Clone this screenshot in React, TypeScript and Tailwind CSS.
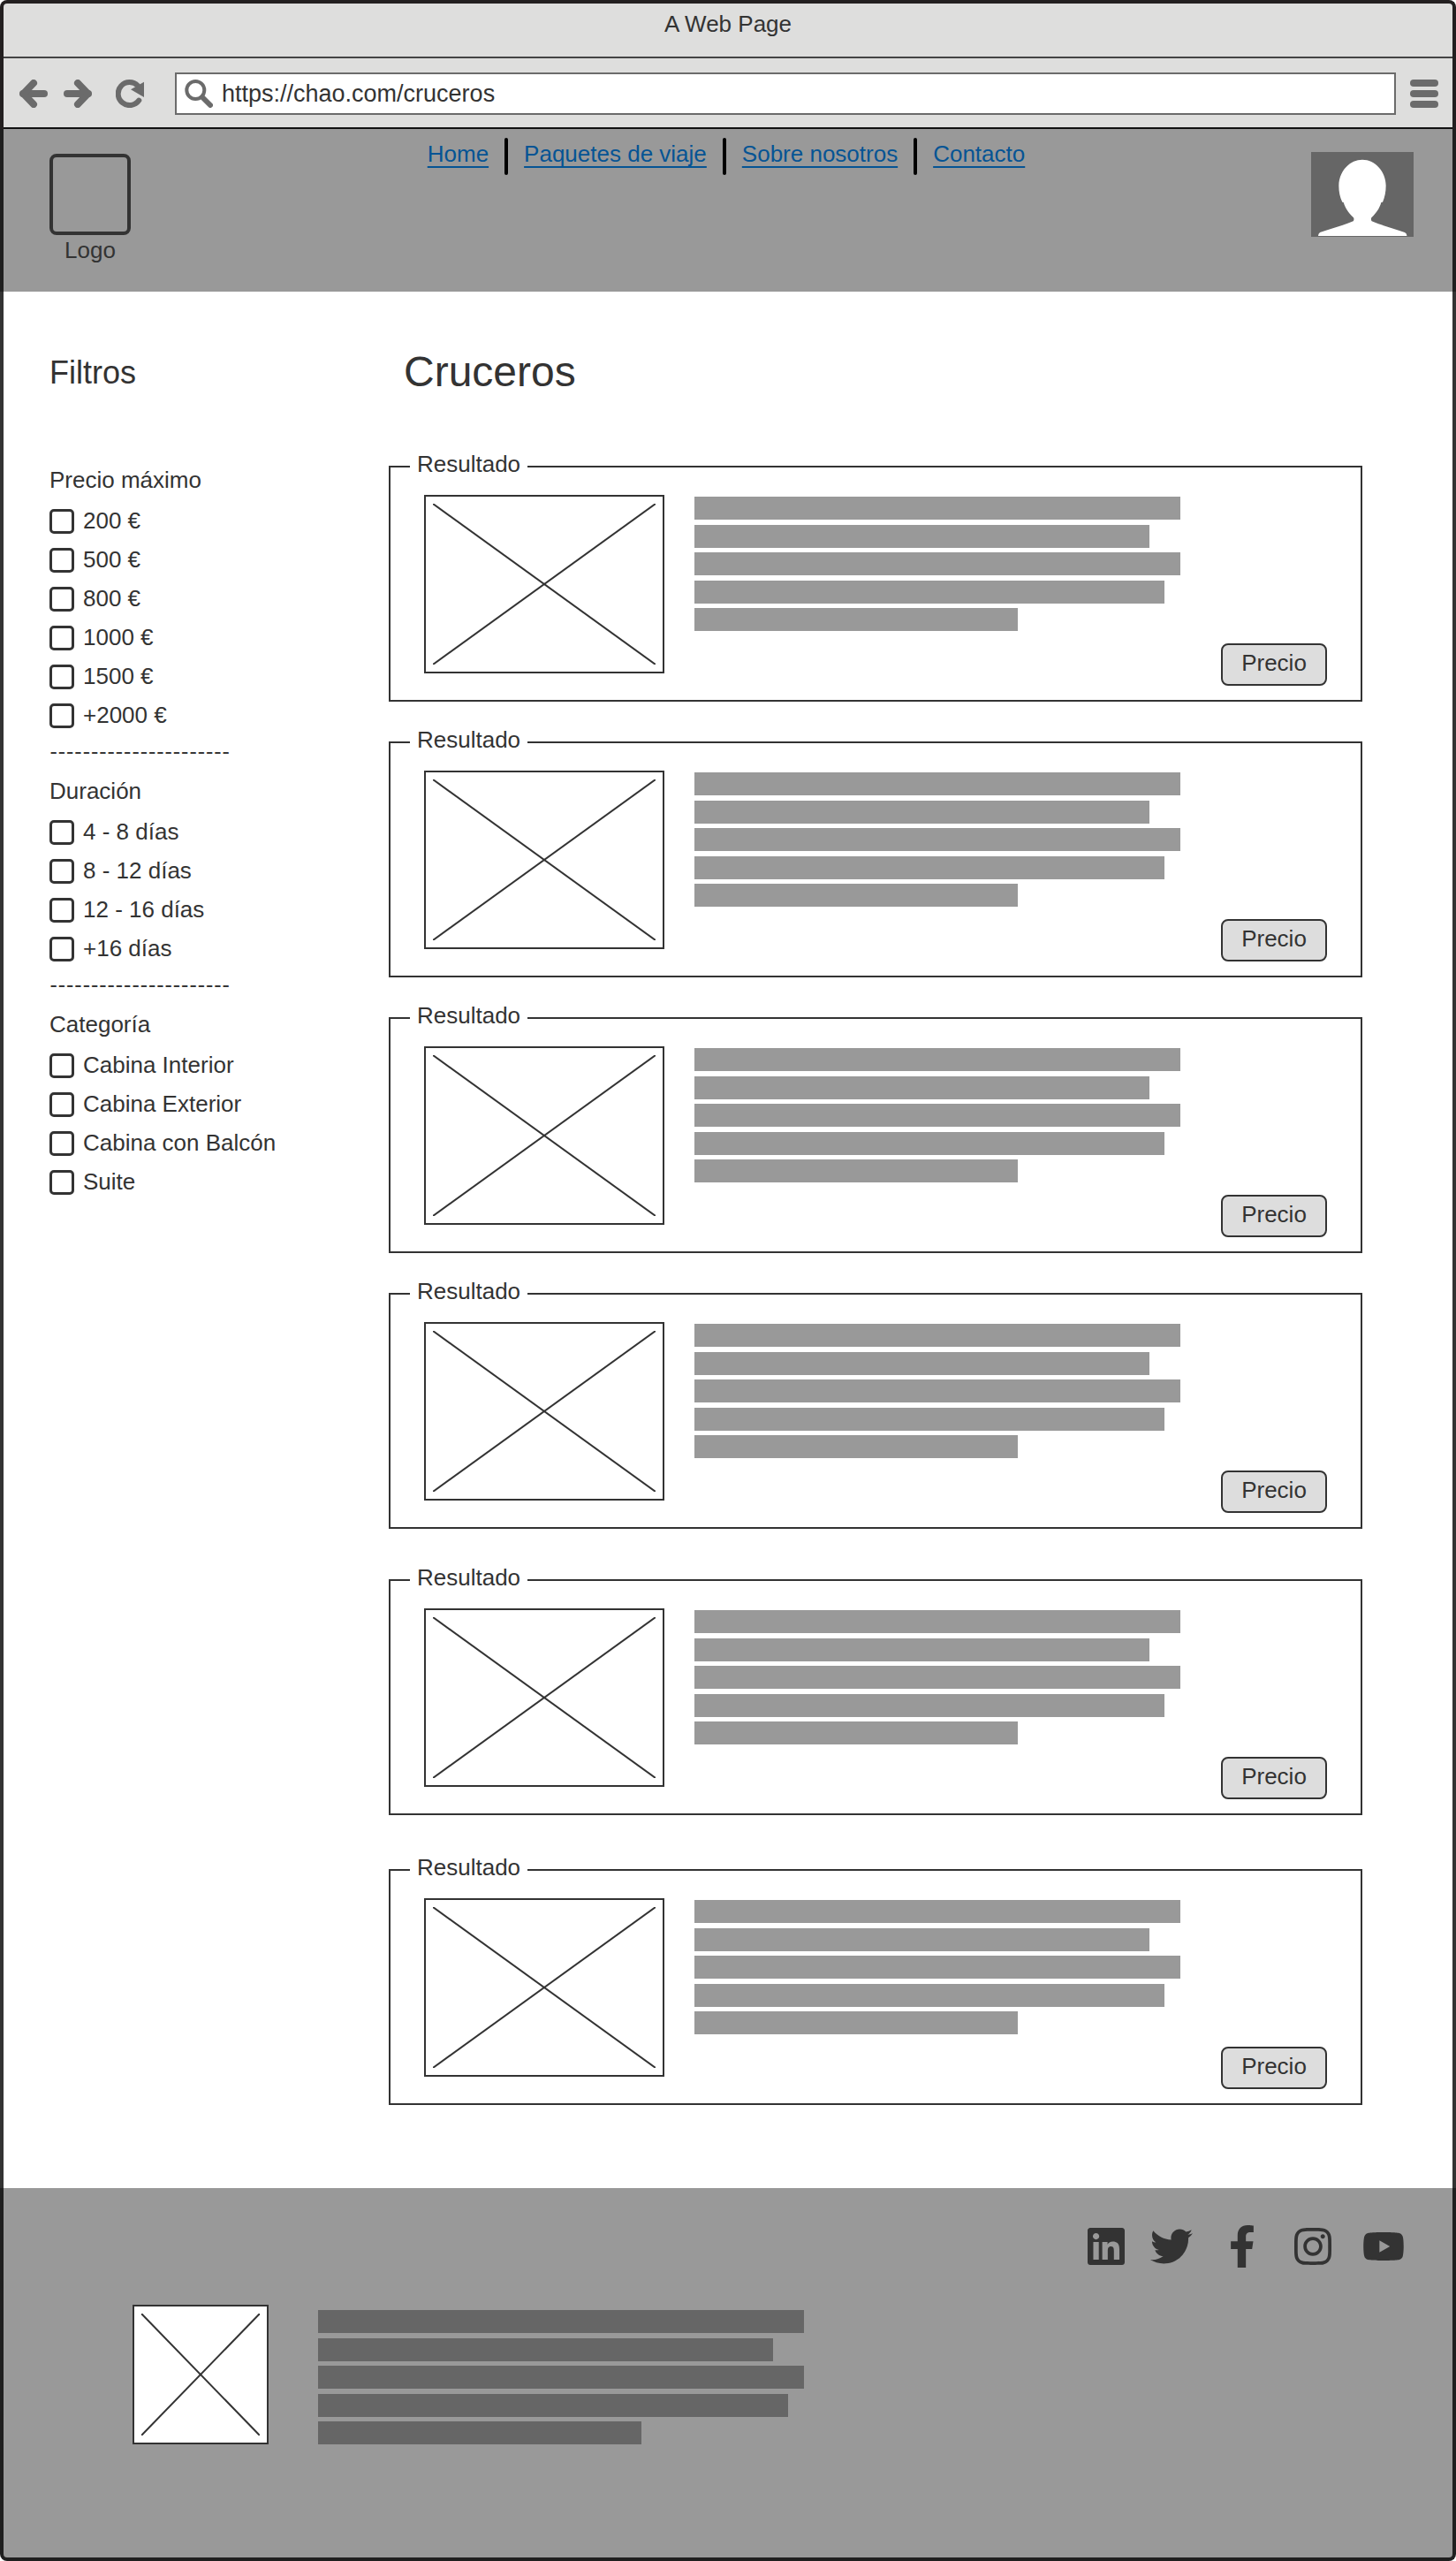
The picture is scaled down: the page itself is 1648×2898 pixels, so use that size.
import React from "react";
import { FaFacebookF, FaInstagram, FaLinkedin, FaTwitter, FaYoutube } from "react-icons/fa";

const navLinks = ["Home", "Paquetes de viaje", "Sobre nosotros", "Contacto"];

const filterGroups = [
  { title: "Precio máximo", options: ["200 €", "500 €", "800 €", "1000 €", "1500 €", "+2000 €"] },
  { title: "Duración", options: ["4 - 8 días", "8 - 12 días", "12 - 16 días", "+16 días"] },
  { title: "Categoría", options: ["Cabina Interior", "Cabina Exterior", "Cabina con Balcón", "Suite"] },
];

const results = [
  { id: 1, spacing: "" },
  { id: 2, spacing: "mt-7" },
  { id: 3, spacing: "mt-7" },
  { id: 4, spacing: "mt-7" },
  { id: 5, spacing: "mt-10" },
  { id: 6, spacing: "mt-11" },
];

const socials = [
  { name: "LinkedIn", Icon: FaLinkedin },
  { name: "Twitter", Icon: FaTwitter },
  { name: "Facebook", Icon: FaFacebookF },
  { name: "Instagram", Icon: FaInstagram },
  { name: "YouTube", Icon: FaYoutube },
];

function ArrowIcon({ className = "" }: { className?: string }) {
  return (
    <svg viewBox="0 0 32 32" className={`size-8 ${className}`} fill="none" stroke="currentColor" strokeLinecap="round" aria-hidden="true">
      <path d="M4 16H28" strokeWidth="8" />
      <path d="M16 4L4.5 16L16 28" strokeWidth="8" strokeLinejoin="round" />
    </svg>
  );
}

function ReloadIcon() {
  return (
    <svg viewBox="0 0 32 32" className="size-8" aria-hidden="true">
      <path d="M26.3 23.6A13 13 0 1 1 25 7" fill="none" stroke="currentColor" strokeWidth="6" strokeLinecap="round" />
      <path d="M32 2.7V20L17 11.3Z" fill="currentColor" />
    </svg>
  );
}

function SearchIcon() {
  return (
    <svg viewBox="0 0 32 32" className="size-8 shrink-0 text-[#6b6b6b]" fill="none" stroke="currentColor" aria-hidden="true">
      <circle cx="12.3" cy="12" r="10" strokeWidth="4" />
      <path d="M20 20L29 29" strokeWidth="6" strokeLinecap="round" />
    </svg>
  );
}

function Avatar() {
  return (
    <svg viewBox="0 0 348 288" className="block h-24 w-[116px]" aria-hidden="true">
      <rect width="348" height="288" fill="#666666" />
      <path
        fill="#ffffff"
        d="M174 26C217 26 254 66 254 114C254 135 250 155 243 170L238 171C232 193 220 208 205 223C203 226 203 232 206 235C240 250 282 260 318 273Q326 277 325 285H24Q24 277 30 273C66 261 108 250 143 235C146 232 146 226 144 223C129 208 117 193 110 171L106 170C98 155 94 135 94 114C94 66 131 26 174 26Z"
      />
    </svg>
  );
}

function ImagePlaceholder({ className }: { className: string }) {
  return (
    <div className={`shrink-0 border-2 border-[#333333] bg-white p-2 ${className}`}>
      <svg className="block size-full" role="img" aria-label="Imagen" stroke="#333333" strokeWidth="2">
        <line x1="0" y1="0" x2="100%" y2="100%" />
        <line x1="0" y1="100%" x2="100%" y2="0" />
      </svg>
    </div>
  );
}

function TextBlock({ tone }: { tone: string }) {
  return (
    <div className="flex h-[152px] w-[550px] min-w-0 flex-col justify-between">
      <div className={`h-[26px] w-full ${tone}`} />
      <div className={`h-[26px] w-[515px] max-w-full ${tone}`} />
      <div className={`h-[26px] w-full ${tone}`} />
      <div className={`h-[26px] w-[532px] max-w-full ${tone}`} />
      <div className={`h-[26px] w-[366px] max-w-full ${tone}`} />
    </div>
  );
}

function ResultCard({ spacing }: { spacing: string }) {
  return (
    <fieldset className={`min-w-0 border-2 border-[#333333] px-[38px] pt-[14px] pb-4 ${spacing}`}>
      <legend className="-ml-4 px-2 pb-[6px]">Resultado</legend>
      <div className="flex">
        <ImagePlaceholder className="h-[202px] w-[272px]" />
        <div className="mt-[2px] ml-[34px] min-w-0">
          <TextBlock tone="bg-[#999999]" />
        </div>
        <button type="button" className="mt-[168px] ml-auto h-12 w-[120px] shrink-0 rounded-lg border-2 border-[#333333] bg-[#dddddd] pb-1">
          Precio
        </button>
      </div>
    </fieldset>
  );
}

function Filters() {
  return (
    <aside className="w-[436px] shrink-0 pt-[72px] pl-[52px]">
      <h2 className="mb-[86px] text-[36px] leading-10">Filtros</h2>
      {filterGroups.map((group, index) => (
        <React.Fragment key={group.title}>
          {index > 0 && (
            <p className="h-12 font-[Lato,sans-serif] text-[25px] leading-9" aria-hidden="true">
              ----------------------
            </p>
          )}
          <section>
            <h3 className="mb-[10px]">{group.title}</h3>
            {group.options.map((option) => (
              <label key={option} className="flex h-11 items-center gap-[10px]">
                <input type="checkbox" className="size-7 shrink-0 appearance-none rounded-[5px] border-3 border-[#333333] bg-white checked:bg-[#333333]" />
                <span className="pb-[2px]">{option}</span>
              </label>
            ))}
          </section>
        </React.Fragment>
      ))}
    </aside>
  );
}

export default function App() {
  return (
    <div className="flex min-h-screen flex-col bg-white font-['Liberation_Sans',Arial,sans-serif] text-[26px] leading-[30px] text-[#333333]">
      <div className="rounded-t-lg border-4 border-b-0 border-[#231f20] bg-[#dededd]">
        <div className="h-[62px] border-b-2 border-[#444444] pt-2 text-center">A Web Page</div>
        <div className="flex items-center border-b-2 border-[#111111] pt-4 pr-4 pb-[14px] pl-[18px] text-[#6b6b6b]">
          <button type="button" aria-label="Atrás">
            <ArrowIcon />
          </button>
          <button type="button" aria-label="Adelante" className="ml-[18px]">
            <ArrowIcon className="rotate-180" />
          </button>
          <button type="button" aria-label="Recargar" className="ml-[27px]">
            <ReloadIcon />
          </button>
          <div className="mr-4 ml-[35px] flex h-12 min-w-0 flex-1 items-center gap-[10px] border-2 border-[#6b6b6b] bg-white px-[9px]">
            <SearchIcon />
            <input type="text" aria-label="Dirección" defaultValue="https://chao.com/cruceros" className="min-w-0 flex-1 text-[27px] text-[#333333] outline-none" />
          </div>
          <button type="button" aria-label="Menú" className="flex w-8 flex-col gap-1">
            <span className="h-2 rounded-full bg-[#6b6b6b]" />
            <span className="h-2 rounded-full bg-[#6b6b6b]" />
            <span className="h-2 rounded-full bg-[#6b6b6b]" />
          </button>
        </div>
      </div>

      <header className="grid min-h-[184px] grid-cols-[1fr_auto_1fr] items-start border-x-4 border-[#1f1f1f] bg-[#999999] pr-11 pl-[52px]">
        <div className="mt-7 w-[92px] text-center">
          <div className="mb-[2px] h-[92px] rounded-lg border-4 border-[#333333]" />
          Logo
        </div>
        <nav className="mt-[10px] mr-3 flex gap-[18px]">
          {navLinks.map((link, index) => (
            <React.Fragment key={link}>
              {index > 0 && <span className="h-[42px] w-1 rounded-full bg-black" />}
              <a href="#" className="mt-[3px] text-[#055494] underline decoration-2 underline-offset-[5px] [text-decoration-skip-ink:none]">
                {link}
              </a>
            </React.Fragment>
          ))}
        </nav>
        <a href="#" aria-label="Perfil" className="mt-[26px] justify-self-end">
          <Avatar />
        </a>
      </header>

      <div className="flex flex-1 border-x-4 border-[#333333]">
        <Filters />
        <main className="min-w-0 flex-1 pt-16 pr-[102px] pb-[94px]">
          <h1 className="mb-[62px] pl-[17px] text-[48px] leading-[54px]">Cruceros</h1>
          {results.map((result) => (
            <ResultCard key={result.id} spacing={result.spacing} />
          ))}
        </main>
      </div>

      <footer className="min-h-[422px] rounded-b-lg border-x-4 border-b-4 border-[#1f1f1f] bg-[#999999] pt-[42px]">
        <div className="flex justify-end gap-8 pr-[54px]">
          {socials.map(({ name, Icon }) => (
            <a key={name} href="#" aria-label={name} className={name === "LinkedIn" ? "-mr-[6px]" : ""}>
              <Icon className="size-12" />
            </a>
          ))}
        </div>
        <div className="mt-[42px] flex pl-[146px]">
          <ImagePlaceholder className="h-[158px] w-[154px]" />
          <div className="mt-[6px] ml-14 min-w-0">
            <TextBlock tone="bg-[#666666]" />
          </div>
        </div>
      </footer>
    </div>
  );
}
